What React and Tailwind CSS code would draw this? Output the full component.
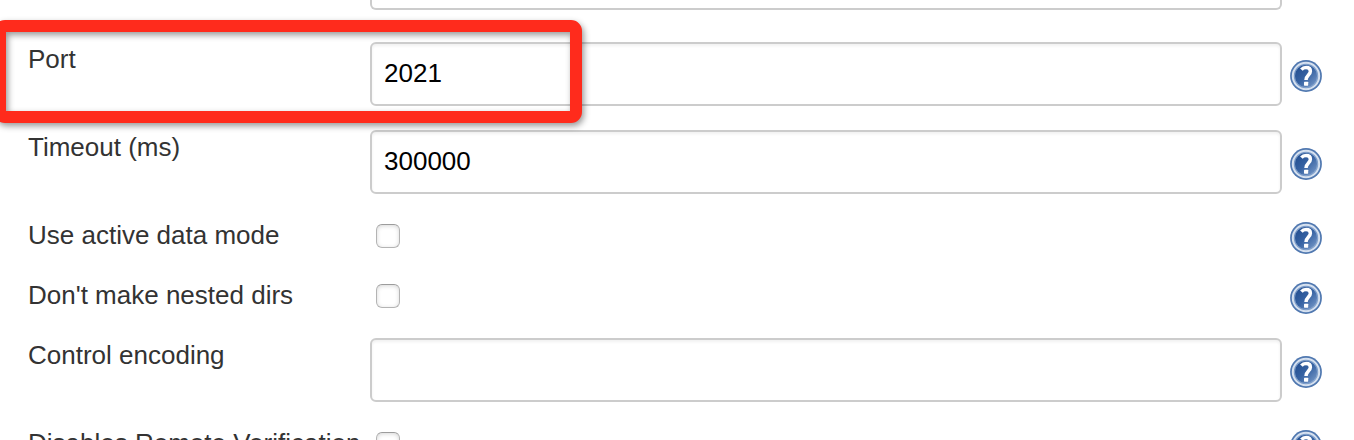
import React from "react";

function HelpIcon() {
  return (
    <svg width="32" height="32" viewBox="0 0 32 32" aria-label="Help" role="img" className="block">
      <defs>
        <linearGradient id="disc" x1="0" y1="0" x2="1" y2="1">
          <stop offset="0" stopColor="#1f4a8c" />
          <stop offset="0.5" stopColor="#3763a3" />
          <stop offset="1" stopColor="#7f9fcc" />
        </linearGradient>
      </defs>
      <circle cx="16" cy="16" r="15.9" fill="#5078b0" />
      <circle cx="16" cy="16" r="13.2" fill="#7f9fca" stroke="#d5e0ef" strokeWidth="2" />
      <circle cx="16" cy="16" r="11.5" fill="url(#disc)" stroke="#8aa8d0" strokeWidth="0.8" />
      <path
        d="M11.4 9.6C12.6 8.2 14.2 7.6 16.1 7.6C18.9 7.6 20.4 9 20.4 11.3C20.4 15 16 15 16 20"
        fill="none"
        stroke="#fff"
        strokeWidth="3.5"
      />
      <rect x="14" y="21.7" width="4.2" height="4" rx="0.6" fill="#fff" />
    </svg>
  );
}

function TextField({ value }) {
  return (
    <input
      type="text"
      defaultValue={value}
      className="block h-16 w-[912px] rounded-md border-2 border-[#cccccc] bg-white px-3 pb-0.5 text-[26px] text-black shadow-[inset_0_2px_3px_rgba(0,0,0,0.06)] outline-none"
    />
  );
}

function Row({ label, value, checkbox }) {
  return (
    <div className={checkbox ? "flex h-[60px] shrink-0 pl-7" : "flex h-[88px] shrink-0 pl-7"}>
      <div className="w-[342px] shrink-0 whitespace-nowrap pt-3.5 text-[26px] leading-[30px] text-[#333333]">
        {label}
      </div>
      <div className={checkbox ? "w-[920px] shrink-0 pt-[18px] pl-1.5" : "w-[920px] shrink-0 pt-3"}>
        {checkbox ? (
          <input
            type="checkbox"
            className="block size-6 appearance-none rounded-md border-[1.5px] border-[#b4b4b4] border-t-[#9c9c9c] bg-white shadow-[inset_0_1px_4px_rgba(0,0,0,0.16)]"
          />
        ) : (
          <TextField value={value} />
        )}
      </div>
      <div className={checkbox ? "pt-4" : "pt-[30px]"}>
        <HelpIcon />
      </div>
    </div>
  );
}

export default function App() {
  return (
    <div className="relative flex h-[440px] w-[1354px] flex-col overflow-hidden bg-white font-['Liberation_Sans',Arial,sans-serif]">
      <div className="h-[30px] shrink-0 pl-[370px]">
        <div className="h-2.5 w-[912px] rounded-b-md border-2 border-t-0 border-[#cccccc]" />
      </div>
      <Row label="Port" value="2021" />
      <Row label="Timeout (ms)" value="300000" />
      <Row label="Use active data mode" checkbox />
      <Row label="Don't make nested dirs" checkbox />
      <Row label="Control encoding" value="" />
      <Row label="Disables Remote Verification" checkbox />
      <div className="pointer-events-none absolute top-5 -left-1.5 h-[103px] w-[588px] rounded-[11px] border-[12px] border-[#ff2b1c] drop-shadow-[2px_3px_3px_rgba(0,0,0,0.4)]" />
    </div>
  );
}
